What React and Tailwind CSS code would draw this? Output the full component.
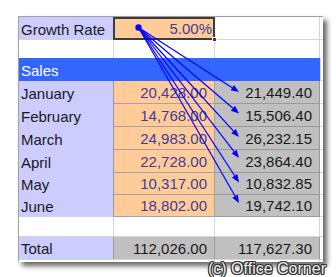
import React from "react";

const months = [
  { label: "January", sales: "20,428.00", grown: "21,449.40", tip: 92 },
  { label: "February", sales: "14,768.00", grown: "15,506.40", tip: 113.5 },
  { label: "March", sales: "24,983.00", grown: "26,232.15", tip: 137 },
  { label: "April", sales: "22,728.00", grown: "23,864.40", tip: 158 },
  { label: "May", sales: "10,317.00", grown: "10,832.85", tip: 182.5 },
  { label: "June", sales: "18,802.00", grown: "19,742.10", tip: 203 },
];

const heights = ["h-[23px]", "h-[23px]", "h-[23px]", "h-[23px]", "h-[22px]", "h-[22px]"];

// trace-dependents arrows from the growth rate cell
const Arrows = () => {
  const from = { x: 138.5, y: 27.5 };
  return (
    <svg className="absolute left-0 top-0 pointer-events-none" width="336" height="277">
      {months.map((m) => {
        const tx = 239;
        const ty = m.tip;
        const dx = tx - from.x;
        const dy = ty - from.y;
        const len = Math.sqrt(dx * dx + dy * dy);
        const ux = dx / len;
        const uy = dy / len;
        const bx = tx - ux * 8;
        const by = ty - uy * 8;
        const px = -uy * 3.2;
        const py = ux * 3.2;
        return (
          <g key={m.label}>
            <line x1={from.x} y1={from.y} x2={bx} y2={by} stroke="#0000ff" strokeWidth="1.2" />
            <polygon
              points={`${tx},${ty} ${bx + px},${by + py} ${bx - px},${by - py}`}
              fill="#0000ff"
            />
          </g>
        );
      })}
      <circle cx={from.x} cy={from.y} r="3.2" fill="#0000ff" />
    </svg>
  );
};

const App = () => {
  return (
    <div
      className="relative w-[336px] h-[277px] bg-white overflow-hidden text-[15px] leading-[17px]"
      style={{ fontFamily: '"Liberation Sans", Arial, sans-serif' }}
    >
      {/* Sheet */}
      <div className="ml-[18px] mt-[16px] w-[305px] border-l border-t border-[#a0a0a0] bg-white shadow-[4px_4px_5px_rgba(0,0,0,0.6)]">
        {/* Growth rate */}
        <div className="flex h-[23px]">
          <div className="w-[95px] bg-[#ccccff] border-b border-[#d4d4d4] flex items-end pl-[2px] pb-[1px] text-[#1a1a1a]">
            Growth Rate
          </div>
          <div className="relative w-[102px] -ml-[1px] bg-[#ffcc99] border-2 border-[#3c3c3c] flex items-end justify-end pr-[1px] pb-[1px] text-[#3d3d99]">
            5.00%
            <div className="absolute -right-[4px] -bottom-[4px] w-[5px] h-[5px] bg-[#3c3c3c] border border-white"></div>
          </div>
          <div className="w-[105px] border-r border-b border-[#d4d4d4]"></div>
          <div className="flex-1 border-b border-[#d4d4d4]"></div>
        </div>

        {/* blank */}
        <div className="flex h-[18px]">
          <div className="w-[95px] border-r border-[#d4d4d4]"></div>
          <div className="w-[101px] border-r border-[#d4d4d4]"></div>
          <div className="w-[105px] border-r border-[#d4d4d4]"></div>
          <div className="flex-1"></div>
        </div>

        {/* Sales header */}
        <div className="flex h-[23px]">
          <div className="w-[301px] bg-[#3366ff] text-white flex items-end pl-[2px] pb-[2px]">Sales</div>
          <div className="flex-1 border-l border-[#d4d4d4] border-b"></div>
        </div>

        {months.map((m, i) => (
          <div key={m.label} className={`flex ${heights[i]}`}>
            <div className="w-[95px] bg-[#ccccff] border-r border-[#999999] flex items-end pl-[2px] pb-[2px] text-[#1a1a1a]">
              {m.label}
            </div>
            <div className="w-[101px] bg-[#ffcc99] border-r border-b border-[#a3a3a3] flex items-end justify-end pr-[7px] pb-[2px] text-[#3d3d99]">
              {m.sales}
            </div>
            <div className="w-[105px] bg-[#c0c0c0] border-r border-b border-[#999999] flex items-end justify-end pr-[7px] pb-[2px] text-[#1a1a1a]">
              {m.grown}
            </div>
            <div className="flex-1 border-b border-[#d4d4d4]"></div>
          </div>
        ))}

        {/* blank */}
        <div className="flex h-[20px]">
          <div className="w-[95px] border-r border-b border-[#d4d4d4]"></div>
          <div className="w-[101px] border-r border-b border-[#d4d4d4]"></div>
          <div className="w-[105px] border-r border-b border-[#d4d4d4]"></div>
          <div className="flex-1 border-b border-[#d4d4d4]"></div>
        </div>

        {/* Total */}
        <div className="flex h-[22px]">
          <div className="w-[95px] bg-[#ccccff] border-r border-[#999999] flex items-end pl-[2px] pb-[2px] text-[#1a1a1a]">
            Total
          </div>
          <div className="w-[101px] bg-[#c0c0c0] border-r border-[#999999] flex items-end justify-end pr-[7px] pb-[2px] text-[#1a1a1a]">
            112,026.00
          </div>
          <div className="w-[105px] bg-[#c0c0c0] border-r border-[#999999] flex items-end justify-end pr-[7px] pb-[2px] text-[#1a1a1a]">
            117,627.30
          </div>
          <div className="flex-1"></div>
        </div>
        <div className="flex h-[3px]">
          <div className="w-[95px] border-r border-t border-[#d4d4d4]"></div>
          <div className="w-[101px] border-r border-t border-[#d4d4d4]"></div>
          <div className="w-[105px] border-r border-t border-[#d4d4d4]"></div>
          <div className="flex-1 border-t border-[#d4d4d4]"></div>
        </div>
      </div>

      <Arrows />

      {/* watermark */}
      <div
        className="absolute left-[208px] top-[260px] text-[16px] leading-[18px] text-[#eeeeee] [text-shadow:1px_0_0_#333,-1px_0_0_#333,0_1px_0_#333,0_-1px_0_#333,1px_1px_0_#333,-1px_-1px_0_#333,1px_-1px_0_#333,-1px_1px_0_#333]"
      >
        (c) Office Corner
      </div>
    </div>
  );
};

export default App;
